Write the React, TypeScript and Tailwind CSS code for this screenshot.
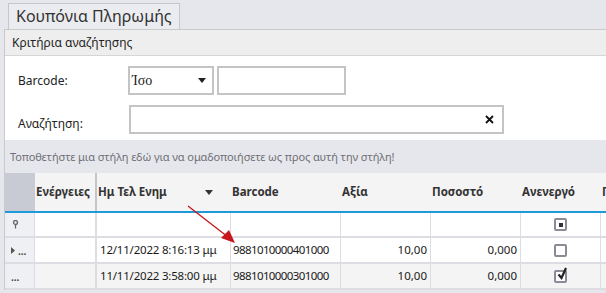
import React from "react";

type Row = {
  date: string;
  barcode: string;
  value: string;
  percent: string;
  inactive: boolean;
  current?: boolean;
  alt?: boolean;
};

const rows: Row[] = [
  { date: "12/11/2022 8:16:13 μμ", barcode: "9881010000401000", value: "10,00", percent: "0,000", inactive: false, current: true },
  { date: "11/11/2022 3:58:00 μμ", barcode: "9881010000301000", value: "10,00", percent: "0,000", inactive: true, alt: true },
];

const cols = "grid grid-cols-[30px_62px_134px_110px_90px_90px_80px_120px]";

function CheckBox({ state }: { state: "empty" | "checked" | "mixed" }) {
  return (
    <div className="relative w-[13px] h-[13px] border-2 border-[#8b8b96] rounded-[2px] bg-white flex items-center justify-center">
      {state === "mixed" && <div className="w-[4px] h-[4px] bg-[#333]" />}
      {state === "checked" && (
        <svg width="11" height="13" viewBox="0 0 11 13" className="absolute left-[1px] -top-[5px]">
          <path d="M1.5 7.5 L4.5 11 L9 1" fill="none" stroke="#222" strokeWidth="2.2" />
        </svg>
      )}
    </div>
  );
}

function FilterIcon() {
  return (
    <svg width="7" height="9" viewBox="0 0 7 9">
      <circle cx="3.5" cy="2.5" r="2" fill="none" stroke="#666" strokeWidth="1.3" />
      <path d="M3.5 4.5 V8.5" stroke="#666" strokeWidth="1.3" />
    </svg>
  );
}

export default function App() {
  return (
    <div className="relative w-[606px] h-[293px] overflow-hidden bg-[#e6e7ec] font-['Noto_Sans',sans-serif] text-[#222]">
      {/* Tab strip */}
      <div className="h-[29px] flex items-end pl-[8px]">
        <div className="h-[26px] px-[7px] border border-b-0 border-[#c5c6cc] bg-[#ebecf0] text-[16px] leading-[24px] text-[#333]">
          Κουπόνια Πληρωμής
        </div>
      </div>

      <div className="ml-[4px] border-l border-t border-[#c9c9ce] bg-white">
        {/* Search criteria header */}
        <div className="h-[26px] bg-[#eeeeee] border-b border-[#d6d6d6] pl-[7px] text-[12px] leading-[26px] text-[#222]">
          Κριτήρια αναζήτησης
        </div>

        {/* Form */}
        <div className="h-[84px] flex flex-col pt-[10px] gap-[10px] text-[12px]">
          <div className="flex items-center h-[29px]">
            <div className="w-[123px] pl-[13px]">Barcode:</div>
            <div className="w-[86px] h-[29px] border-2 border-[#c4c4c4] flex items-center justify-between pl-[2px] pr-[6px]">
              <span className="font-['Liberation_Serif',serif] text-[14px]">Ίσο</span>
              <svg width="8" height="5" viewBox="0 0 8 5"><path d="M0 0 H8 L4 5 Z" fill="#222" /></svg>
            </div>
            <div className="ml-[3px] w-[129px] h-[29px] border-2 border-[#c4c4c4]" />
          </div>
          <div className="flex items-center h-[29px]">
            <div className="w-[124px] pl-[13px] pt-[8px]">Αναζήτηση:</div>
            <div className="w-[375px] h-[29px] border-2 border-[#c4c4c4] flex items-center justify-end pr-[8px]">
              <svg width="9" height="9" viewBox="0 0 9 9"><path d="M1 1 L8 8 M8 1 L1 8" stroke="#111" strokeWidth="1.8" /></svg>
            </div>
          </div>
        </div>

        {/* Group panel */}
        <div className="h-[33px] bg-[#e6e7ec] pl-[5px] text-[11px] leading-[33px] text-[#6f6f75] tracking-[-0.1px]">
          Τοποθετήστε μια στήλη εδώ για να ομαδοποιήσετε ως προς αυτή την στήλη!
        </div>

        {/* Grid header */}
        <div className={`${cols} h-[40px] bg-[#f4f4f4] border-b-2 border-[#1e9ad8] text-[11.5px] font-bold text-[#333]`}>
          <div className="bg-[#c8cad4]" />
          <div className="flex items-center pl-[1px] border-r-2 border-[#c4c4cc]">Ενέργειες</div>
          <div className="flex items-center justify-between pl-[1px] pr-[18px]">
            <span>Ημ Τελ Ενημ</span>
            <svg width="8" height="5" viewBox="0 0 8 5"><path d="M0 0 H8 L4 5 Z" fill="#333" /></svg>
          </div>
          <div className="flex items-center pl-[1px]">Barcode</div>
          <div className="flex items-center pl-[1px]">Αξία</div>
          <div className="flex items-center pl-[1px]">Ποσοστό</div>
          <div className="flex items-center pl-[1px]">Ανενεργό</div>
          <div className="flex items-center pl-[1px] whitespace-nowrap">Π</div>
        </div>

        {/* Filter row */}
        <div className={`${cols} h-[25px] bg-white border-b-2 border-[#dcdce2]`}>
          <div className="bg-[#eff0f3] flex items-center pl-[7px] border-r border-[#dcdce2]"><FilterIcon /></div>
          <div className="border-r-2 border-[#dcdce2]" />
          <div className="border-r border-[#dcdce2]" />
          <div className="border-r border-[#dcdce2]" />
          <div className="border-r border-[#dcdce2]" />
          <div className="border-r border-[#dcdce2]" />
          <div className="border-r border-[#dcdce2] flex items-center justify-center"><CheckBox state="mixed" /></div>
          <div />
        </div>

        {/* Data rows */}
        {rows.map((r) => (
          <div
            key={r.barcode}
            className={`${cols} h-[26px] border-b-2 border-[#dcdce2] text-[11.5px] text-[#1a1a1a] ${r.alt ? "bg-[#f4f4f4]" : "bg-white"}`}
          >
            <div className="bg-[#eff0f3] flex items-center pl-[6px] gap-[3px] border-r border-[#dcdce2]">
              {r.current && (
                <svg width="4" height="7" viewBox="0 0 4 7"><path d="M0 0 L4 3.5 L0 7 Z" fill="#555" /></svg>
              )}
              <span className="text-[10px] font-bold leading-none text-[#444] mt-[2px]">...</span>
            </div>
            <div className="border-r-2 border-[#dcdce2]" />
            <div className="flex items-center pl-[3px] border-r border-[#dcdce2] whitespace-nowrap tracking-[-0.2px]">{r.date}</div>
            <div className="flex items-center pl-[2px] border-r border-[#dcdce2] tracking-[-0.6px]">{r.barcode}</div>
            <div className="flex items-center justify-end pr-[3px] border-r border-[#dcdce2]">{r.value}</div>
            <div className="flex items-center justify-end pr-[3px] border-r border-[#dcdce2]">{r.percent}</div>
            <div className="flex items-center justify-center border-r border-[#dcdce2]">
              <CheckBox state={r.inactive ? "checked" : "empty"} />
            </div>
            <div />
          </div>
        ))}
      </div>

      {/* Annotation arrow */}
      <svg className="absolute left-0 top-0 pointer-events-none" width="606" height="293">
        <line x1="188" y1="206" x2="228" y2="237" stroke="#c8161d" strokeWidth="1.3" />
        <path d="M235 243 L221 238 L229 230 Z" fill="#c8161d" />
      </svg>
    </div>
  );
}
